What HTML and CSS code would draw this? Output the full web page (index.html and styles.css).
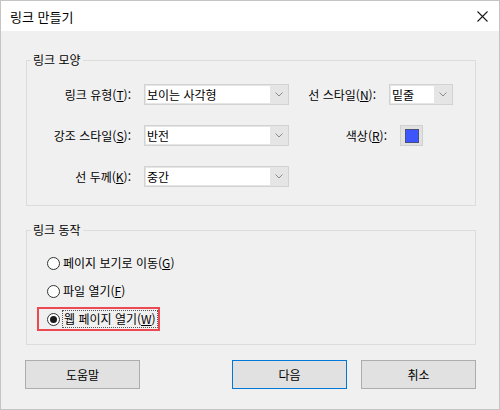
FILE: index.html
```html
<!DOCTYPE html>
<html lang="ko">
<head>
<meta charset="utf-8">
<title>링크 만들기</title>
<link rel="stylesheet" href="styles.css">
</head>
<body>
<div class="window">
  <div class="titlebar">
    <span class="title">링크 만들기</span>
    <svg class="close" width="11" height="11" viewBox="0 0 11 11">
      <path d="M0.5 0.5 L10.5 10.5 M10.5 0.5 L0.5 10.5" stroke="#1a1a1a" stroke-width="1.1" fill="none"/>
    </svg>
  </div>
  <div class="content">
    <fieldset class="group group-look">
      <legend>링크 모양</legend>
      <div class="row">
        <label class="lbl">링크 유형(<u>T</u>):</label>
        <div class="combo combo-wide"><span class="field">보이는 사각형</span><span class="arrow"><svg width="8" height="5" viewBox="0 0 8 5"><path d="M0.5 0.5 L4 4 L7.5 0.5" stroke="#8a8a8a" fill="none"/></svg></span></div>
        <label class="lbl lbl-style">선 스타일(<u>N</u>):</label>
        <div class="combo combo-narrow"><span class="field">밑줄</span><span class="arrow"><svg width="8" height="5" viewBox="0 0 8 5"><path d="M0.5 0.5 L4 4 L7.5 0.5" stroke="#8a8a8a" fill="none"/></svg></span></div>
      </div>
      <div class="row">
        <label class="lbl">강조 스타일(<u>S</u>):</label>
        <div class="combo combo-wide"><span class="field">반전</span><span class="arrow"><svg width="8" height="5" viewBox="0 0 8 5"><path d="M0.5 0.5 L4 4 L7.5 0.5" stroke="#8a8a8a" fill="none"/></svg></span></div>
        <label class="lbl lbl-color">색상(<u>R</u>):</label>
        <div class="swatch"><span class="chip"></span></div>
      </div>
      <div class="row">
        <label class="lbl">선 두께(<u>K</u>):</label>
        <div class="combo combo-wide"><span class="field">중간</span><span class="arrow"><svg width="8" height="5" viewBox="0 0 8 5"><path d="M0.5 0.5 L4 4 L7.5 0.5" stroke="#8a8a8a" fill="none"/></svg></span></div>
      </div>
    </fieldset>

    <fieldset class="group group-action">
      <legend>링크 동작</legend>
      <div class="option"><span class="radio"></span><span class="text">페이지 보기로 이동(<u>G</u>)</span></div>
      <div class="option"><span class="radio"></span><span class="text">파일 열기(<u>F</u>)</span></div>
      <div class="option selected"><span class="radio"><span class="dot"></span></span><span class="text focus">웹 페이지 열기(<u>W</u>)</span></div>
    </fieldset>

    <div class="buttons">
      <button class="btn">도움말</button>
      <span class="spacer"></span>
      <button class="btn default">다음</button>
      <button class="btn">취소</button>
    </div>
  </div>
</div>
</body>
</html>
```

FILE: styles.css
```css
* {
  box-sizing: border-box;
}

html, body {
  margin: 0;
  padding: 0;
  background: #ffffff;
}

body {
  font-family: "Noto Sans CJK KR", "Noto Sans", sans-serif;
  font-size: 12px;
  color: #000;
}

.window {
  width: 500px;
  height: 410px;
  border: 1px solid #c4c4c4;
  background: #f0f0f0;
  display: flex;
  flex-direction: column;
}

.titlebar {
  height: 30px;
  background: #ffffff;
  display: flex;
  align-items: center;
  padding: 0 11px 0 9px;
}

.title {
  flex: 1;
  font-size: 13px;
  line-height: 16px;
  padding-top: 1px;
}

.close {
  display: block;
  margin-top: 1px;
}

.content {
  padding: 21px 23px 0 24px;
}

/* group boxes */
.group {
  margin: 0 0 0 1px;
  width: 450px;
  border: 1px solid #dcdcdc;
  padding: 16px 0 18px 0;
}

.group legend {
  margin-left: 4px;
  padding: 0 2px;
  line-height: 16px;
  font-size: 12px;
}

.group-action {
  margin-top: 16px;
  padding: 13px 0 13px 0;
}

/* appearance rows */
.row {
  display: flex;
  align-items: center;
  height: 21px;
  margin-bottom: 20px;
}

.row:last-child {
  margin-bottom: 0;
}

.lbl {
  width: 104px;
  text-align: right;
  margin-right: 13px;
  white-space: nowrap;
  line-height: 16px;
}

.lbl-style {
  width: 87px;
}

.lbl-color {
  width: 98px;
}

.combo {
  height: 21px;
  display: flex;
  background: #e5e5e5;
  border: 1px solid #d2d2d2;
}

.combo-wide {
  width: 145px;
}

.combo-narrow {
  width: 64px;
}

.field {
  flex: 1;
  background: #ffffff;
  margin: 1px 0 1px 1px;
  padding-left: 1px;
  line-height: 17px;
  white-space: nowrap;
  overflow: hidden;
}

.arrow {
  width: 18px;
  display: flex;
  align-items: center;
  justify-content: center;
}

.arrow svg {
  display: block;
}

.swatch {
  width: 23px;
  height: 21px;
  background: #e1e1e1;
  border: 1px solid #d0d0d0;
  display: flex;
  align-items: center;
  justify-content: center;
}

.chip {
  width: 14px;
  height: 14px;
  background: #3d55fe;
  border: 1px solid #4a4f7a;
}

/* link action options */
.option {
  display: flex;
  align-items: center;
  height: 24px;
  margin: 0 0 4px 10px;
  padding: 0 1px 0 8px;
  border: 2px solid transparent;
  width: max-content;
}

.option:last-child {
  margin-bottom: 0;
}

.option.selected {
  border-color: #ec4a52;
}

.radio {
  width: 13px;
  height: 13px;
  border: 1px solid #333333;
  border-radius: 50%;
  background: #ffffff;
  margin-right: 3px;
  display: flex;
  align-items: center;
  justify-content: center;
}

.dot {
  width: 7px;
  height: 7px;
  border-radius: 50%;
  background: #1a1a1a;
}

.text {
  line-height: 16px;
  white-space: nowrap;
}

.focus {
  outline: 1px dotted #555;
  outline-offset: 0;
  padding: 0 1px;
}

/* dialog buttons */
.buttons {
  display: flex;
  margin-top: 15px;
}

.spacer {
  flex: 1;
}

.btn {
  width: 115px;
  height: 29px;
  font-family: inherit;
  font-size: 12px;
  color: #000;
  background: #e1e1e1;
  border: 1px solid #adadad;
  padding: 0;
  margin: 0;
}

.btn.default {
  border-color: #0078d7;
  margin-right: 14px;
}
```
